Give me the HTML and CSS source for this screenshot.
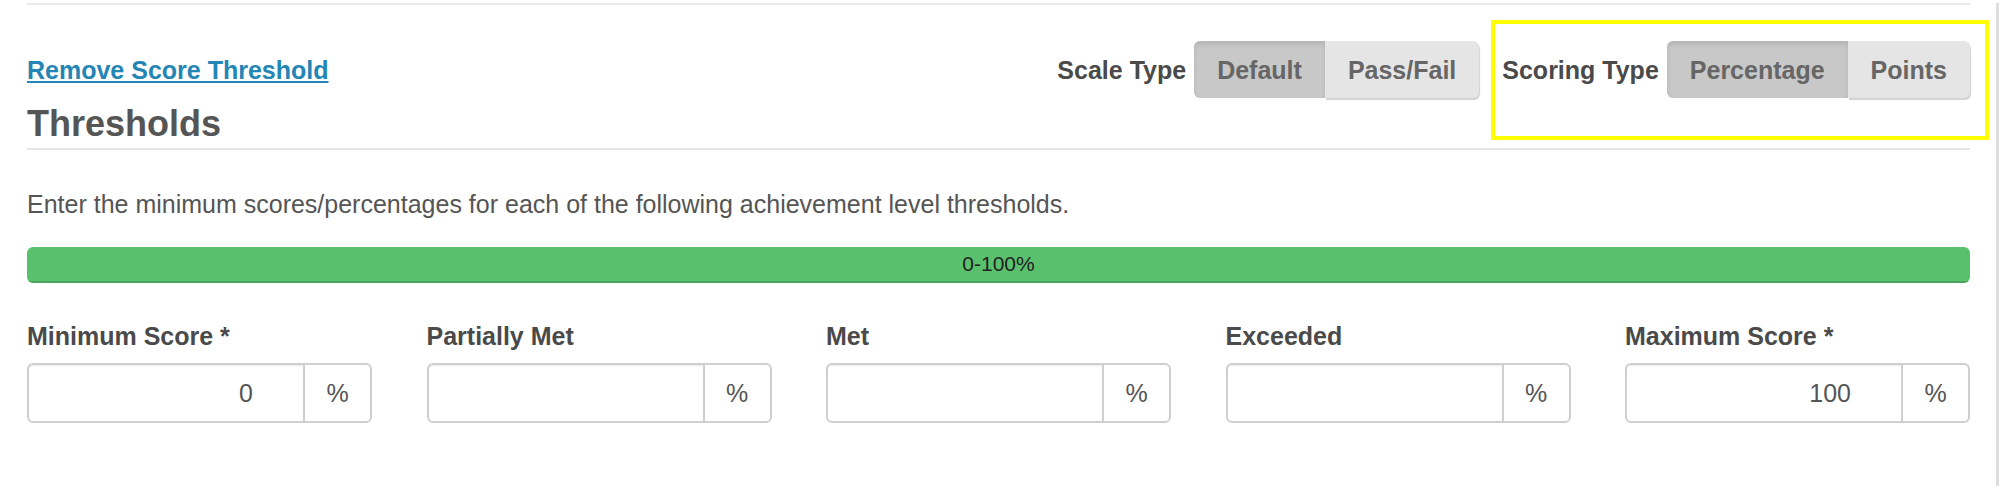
FILE: index.html
```html
<!DOCTYPE html>
<html lang="en">
<head>
<meta charset="utf-8">
<title>Thresholds</title>
<link rel="stylesheet" href="styles.css">
</head>
<body>
<div class="page">
  <section class="panel">
    <div class="header-row">
      <a class="remove-link" href="#">Remove Score Threshold</a>
      <div class="controls">
        <div class="control">
          <span class="control-label">Scale Type</span>
          <div class="btn-group">
            <button class="btn active" type="button">Default</button>
            <button class="btn" type="button">Pass/Fail</button>
          </div>
        </div>
        <div class="control scoring">
          <span class="control-label">Scoring Type</span>
          <div class="btn-group">
            <button class="btn active" type="button">Percentage</button>
            <button class="btn" type="button">Points</button>
          </div>
          <span class="highlight"></span>
        </div>
      </div>
    </div>

    <h3 class="section-title">Thresholds</h3>

    <p class="help-text">Enter the minimum scores/percentages for each of the following achievement level thresholds.</p>

    <div class="progress">
      <div class="progress-bar">0-100%</div>
    </div>

    <div class="fields">
      <div class="field">
        <label class="field-label">Minimum Score *</label>
        <div class="input-group">
          <input class="form-control" type="text" value="0">
          <span class="addon">%</span>
        </div>
      </div>
      <div class="field">
        <label class="field-label">Partially Met</label>
        <div class="input-group">
          <input class="form-control" type="text" value="">
          <span class="addon">%</span>
        </div>
      </div>
      <div class="field">
        <label class="field-label">Met</label>
        <div class="input-group">
          <input class="form-control" type="text" value="">
          <span class="addon">%</span>
        </div>
      </div>
      <div class="field">
        <label class="field-label">Exceeded</label>
        <div class="input-group">
          <input class="form-control" type="text" value="">
          <span class="addon">%</span>
        </div>
      </div>
      <div class="field">
        <label class="field-label">Maximum Score *</label>
        <div class="input-group">
          <input class="form-control" type="text" value="100">
          <span class="addon">%</span>
        </div>
      </div>
    </div>
  </section>
</div>
</body>
</html>
```

FILE: styles.css
```css
* {
  box-sizing: border-box;
}

html, body {
  margin: 0;
  padding: 0;
  background: #fff;
}

body {
  font-family: "Liberation Sans", Arial, Helvetica, sans-serif;
  font-size: 25px;
  color: #555;
}

.page {
  min-height: 486px;
  width: 1999px;
  padding: 0 26px 0 27px;
  border-right: 3px solid #dedede;
}

.panel {
  margin-top: 3px;
  border-top: 2px solid #e8e8e8;
}

.header-row {
  display: flex;
  justify-content: space-between;
  align-items: baseline;
  padding-top: 36px;
}

.remove-link {
  font-weight: bold;
  font-size: 25px;
  line-height: 36px;
  color: #2386b4;
  text-decoration: underline;
}

.controls {
  display: flex;
  align-items: baseline;
  gap: 23px;
}

.control {
  display: flex;
  align-items: baseline;
  gap: 8px;
}

.control-label {
  font-weight: bold;
  color: #4a4a4a;
  line-height: 36px;
}

.scoring {
  position: relative;
}

.highlight {
  position: absolute;
  left: -11px;
  right: -19px;
  top: -21px;
  bottom: -42px;
  border: 4px solid #ffff00;
  pointer-events: none;
}

.btn-group {
  display: flex;
}

.btn {
  font-family: "Liberation Sans", Arial, Helvetica, sans-serif;
  font-size: 25px;
  font-weight: bold;
  line-height: 36px;
  padding: 10.5px 23px;
  height: 57px;
  margin: 0;
  border: none;
  color: #666;
  background: #e5e5e5;
  box-shadow: 1px 2px 1px rgba(0, 0, 0, 0.18);
}

.btn:first-child {
  border-radius: 6px 0 0 6px;
}

.btn:last-child {
  border-radius: 0 6px 6px 0;
}

.btn.active {
  background: #c8c8c8;
  box-shadow: inset 0 3px 5px rgba(0, 0, 0, 0.1);
}

.section-title {
  margin: 6px 0 0;
  padding-bottom: 4px;
  font-size: 36px;
  line-height: 40px;
  font-weight: bold;
  color: #555;
  border-bottom: 2px solid #e5e5e5;
}

.help-text {
  margin: 36px 0 0;
  line-height: 36px;
  color: #555;
}

.progress {
  margin-top: 25px;
  height: 36px;
  border-radius: 6px;
  overflow: hidden;
  background: #f5f5f5;
}

.progress-bar {
  height: 100%;
  width: 100%;
  background: #59c16e;
  box-shadow: inset 0 -2px 0 rgba(0, 0, 0, 0.15);
  color: #222;
  font-size: 21px;
  line-height: 34px;
  text-align: center;
}

.fields {
  margin-top: 35px;
  display: grid;
  grid-template-columns: repeat(5, minmax(0, 1fr));
  column-gap: 54.5px;
}

.field {
  display: flex;
  flex-direction: column;
  min-width: 0;
}

.field-label {
  font-weight: bold;
  color: #4a4a4a;
  line-height: 36px;
  margin-bottom: 9px;
  white-space: nowrap;
}

.input-group {
  display: flex;
  height: 60px;
  min-width: 0;
}

.form-control {
  flex: 1 1 0;
  width: 0;
  min-width: 0;
  height: 60px;
  margin: 0;
  padding: 0 50px 0 12px;
  font-family: "Liberation Sans", Arial, Helvetica, sans-serif;
  font-size: 25px;
  color: #555;
  text-align: right;
  border: 2px solid #cfcfcf;
  border-right: 1px solid #cfcfcf;
  border-radius: 6px 0 0 6px;
  box-shadow: inset 0 1px 1px rgba(0, 0, 0, 0.075);
  background: #fff;
  outline: none;
}

.addon {
  flex: 0 0 68px;
  width: 68px;
  display: flex;
  align-items: center;
  justify-content: center;
  color: #555;
  font-size: 25px;
  border: 2px solid #cfcfcf;
  border-left: 1px solid #cfcfcf;
  border-radius: 0 6px 6px 0;
  background: #fff;
}
```
